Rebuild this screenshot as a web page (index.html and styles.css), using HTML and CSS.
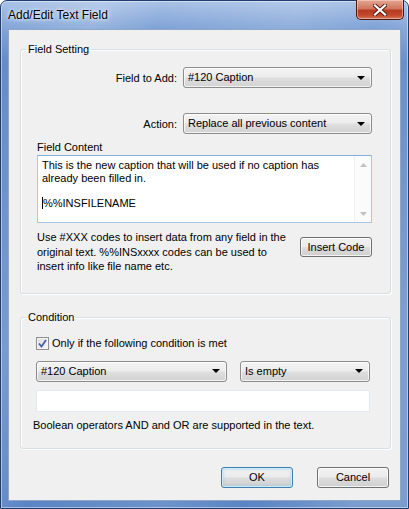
FILE: index.html
```html
<!DOCTYPE html>
<html>
<head>
<meta charset="utf-8">
<link rel="stylesheet" href="styles.css">
</head>
<body>
<div class="window">
  <div class="titlebar">
    <span class="title">Add/Edit Text Field</span>
    <div class="close-btn">
      <svg width="14" height="12" viewBox="0 0 14 12"><path d="M2 1.5 L12 10.5 M12 1.5 L2 10.5" stroke="#5a1a10" stroke-width="4" stroke-linecap="square"/><path d="M2 1.5 L12 10.5 M12 1.5 L2 10.5" stroke="#ffffff" stroke-width="2.2" stroke-linecap="square"/></svg>
    </div>
  </div>
  <div class="client">
    <fieldset class="group group-setting">
      <legend>Field Setting</legend>
      <div class="form-row">
        <label>Field to Add:</label>
        <div class="combo combo-main"><span>#120 Caption</span><i class="arrow"></i></div>
      </div>
      <div class="form-row row-action">
        <label>Action:</label>
        <div class="combo combo-main"><span>Replace all previous content</span><i class="arrow"></i></div>
      </div>
      <div class="content-label">Field Content</div>
      <div class="memo">
        <div class="memo-text">
          <div>This is the new caption that will be used if no caption has</div>
          <div>already been filled in.</div>
          <div>&nbsp;</div>
          <div><span class="caret"></span>%%INSFILENAME</div>
        </div>
        <div class="vscroll">
          <svg width="7" height="4" viewBox="0 0 7 4"><path d="M0 4 L3.5 0 L7 4 Z" fill="#c2c2c2"/></svg>
          <svg width="7" height="4" viewBox="0 0 7 4"><path d="M0 0 L3.5 4 L7 0 Z" fill="#c2c2c2"/></svg>
        </div>
      </div>
      <div class="help-row">
        <p class="help">Use #XXX codes to insert data from any field in the<br>original text. %%INSxxxx codes can be used to<br>insert info like file name etc.</p>
        <div class="button btn-insert">Insert Code</div>
      </div>
    </fieldset>

    <fieldset class="group group-condition">
      <legend>Condition</legend>
      <div class="check-row">
        <span class="checkbox">
          <svg width="9" height="9" viewBox="0 0 9 9"><path d="M1 4.5 L3.5 7.5 L8 1" fill="none" stroke="#4a5fa8" stroke-width="1.8"/></svg>
        </span>
        <span>Only if the following condition is met</span>
      </div>
      <div class="combo-row">
        <div class="combo combo-field"><span>#120 Caption</span><i class="arrow"></i></div>
        <div class="combo combo-op"><span>Is empty</span><i class="arrow"></i></div>
      </div>
      <div class="textbox"></div>
      <p class="note">Boolean operators AND and OR are supported in the text.</p>
    </fieldset>

    <div class="buttons">
      <div class="button btn-default">OK</div>
      <div class="button">Cancel</div>
    </div>
  </div>
</div>
</body>
</html>
```

FILE: styles.css
```css
* { box-sizing: border-box; }

html, body {
  margin: 0;
  padding: 0;
  width: 409px;
  height: 509px;
  overflow: hidden;
  background: #ffffff;
  font-family: "Liberation Sans", Arial, sans-serif;
  font-size: 11px;
  color: #000;
}

.window {
  width: 409px;
  height: 509px;
  display: flex;
  flex-direction: column;
  border: 1px solid #1f3d6e;
  border-radius: 7px 7px 0 0;
  background:
    linear-gradient(105deg, rgba(255,255,255,0) 0%, rgba(255,255,255,0.18) 18%, rgba(255,255,255,0) 30%, rgba(255,255,255,0.12) 55%, rgba(255,255,255,0) 70%, rgba(255,255,255,0.2) 90%),
    linear-gradient(180deg, #a9c2e6 0px, #7fa2d6 28px, #5f88c7 60px, #5a84c4 100%);
  box-shadow: inset 0 0 0 1px rgba(255,255,255,0.45);
}

.titlebar {
  height: 28px;
  flex: none;
  display: flex;
  justify-content: space-between;
  align-items: flex-start;
  padding-left: 7px;
  padding-right: 4px;
}

.title {
  font-size: 12px;
  line-height: 29px;
  color: #000;
  text-shadow: 0 0 6px #ffffff, 0 0 3px #eaf2fc;
}

.close-btn {
  width: 48px;
  height: 20px;
  margin-top: -1px;
  border: 1px solid #4a1a16;
  border-top: none;
  border-radius: 0 0 5px 5px;
  background: linear-gradient(180deg, #e4a794 0%, #d0765d 45%, #b83b22 55%, #c3472a 80%, #d6765a 100%);
  box-shadow: inset 0 0 0 1px rgba(255,220,210,0.5);
  display: flex;
  align-items: center;
  justify-content: center;
}

.client {
  flex: 1;
  margin: 0 7px 7px 7px;
  background: #f0f0f0;
  border: 1px solid #8fa6c6;
  display: flex;
  flex-direction: column;
  padding: 0;
}

.group {
  margin: 12px 9px 0 11px;
  border: 1px solid #d5dfe5;
  border-radius: 3px;
  box-shadow: 1px 1px 0 #ffffff inset, 1px 1px 0 #ffffff;
  min-width: 0;
}

.group legend {
  font-size: 11px;
  line-height: 15px;
  padding: 0 2px;
}

.group-setting {
  padding: 10px 18px 19px 16px;
}

.group-setting legend { margin-left: -11px; }

.form-row {
  display: flex;
  justify-content: flex-end;
  align-items: center;
  gap: 6px;
  height: 21px;
}

.row-action { margin-top: 25px; }

.combo {
  height: 21px;
  border: 1px solid #8d8d8d;
  border-radius: 3px;
  background: linear-gradient(180deg, #f4f4f4 0%, #ececec 48%, #dedede 52%, #d3d3d3 100%);
  box-shadow: inset 0 0 0 1px rgba(255,255,255,0.7);
  display: flex;
  align-items: center;
  justify-content: space-between;
  padding: 0 6px 0 4px;
  line-height: 15px;
}

.combo-main { width: 189px; }

.arrow {
  width: 0;
  height: 0;
  border-left: 4px solid transparent;
  border-right: 4px solid transparent;
  border-top: 4px solid #000;
}

.content-label {
  margin-top: 6px;
  line-height: 15px;
  height: 15px;
}

.memo {
  height: 68px;
  background: #ffffff;
  border: 1px solid #a7c7e6;
  border-top-color: #7eb1e0;
  display: flex;
}

.memo-text {
  flex: 1;
  padding: 3px 4px;
  line-height: 12.6px;
}

.caret {
  display: inline-block;
  width: 1px;
  height: 12px;
  background: #000;
  vertical-align: -2px;
}

.vscroll {
  width: 17px;
  background: #fbfbfb;
  border-left: 1px solid #f0f0f0;
  display: flex;
  flex-direction: column;
  justify-content: space-between;
  align-items: center;
  padding: 7px 0 6px 0;
}

.help-row {
  display: flex;
  justify-content: space-between;
  align-items: flex-start;
  margin-top: 7px;
}

.help {
  margin: 0;
  line-height: 14.5px;
}

.button {
  height: 21px;
  width: 72px;
  border: 1px solid #707070;
  border-radius: 3px;
  background: linear-gradient(180deg, #f2f2f2 0%, #ebebeb 48%, #dddddd 52%, #cfcfcf 100%);
  box-shadow: inset 0 0 0 1px rgba(255,255,255,0.75);
  display: flex;
  align-items: center;
  justify-content: center;
  line-height: 15px;
}

.btn-insert {
  margin-top: 7px;
  height: 20px;
}

.group-condition {
  margin-top: 16px;
  padding: 11px 20px 15px 15px;
}

.group-condition legend { margin-left: -10px; }

.check-row {
  display: flex;
  align-items: center;
  height: 15px;
  line-height: 15px;
  gap: 3px;
}

.checkbox {
  width: 13px;
  height: 13px;
  border: 1px solid #8e8f8f;
  background: linear-gradient(135deg, #dcdcdc 0%, #f6f6f6 100%);
  box-shadow: inset 0 0 0 1px #f4f4f4;
  display: flex;
  align-items: center;
  justify-content: center;
}

.combo-row {
  margin-top: 10px;
  display: flex;
  justify-content: space-between;
}

.combo-field { width: 191px; }
.combo-op { width: 130px; }

.textbox {
  margin-top: 8px;
  height: 22px;
  background: #ffffff;
  border: 1px solid #e3e9ef;
}

.note {
  margin: 6px 0 0 -3px;
  line-height: 15px;
}

.buttons {
  margin: 18px 11px 0 0;
  display: flex;
  justify-content: flex-end;
  gap: 24px;
}

.btn-default {
  border-color: #3c7fb1;
  box-shadow: inset 0 0 0 1px #cfeaf8, inset 0 0 2px 2px rgba(120,200,240,0.35);
}
```
